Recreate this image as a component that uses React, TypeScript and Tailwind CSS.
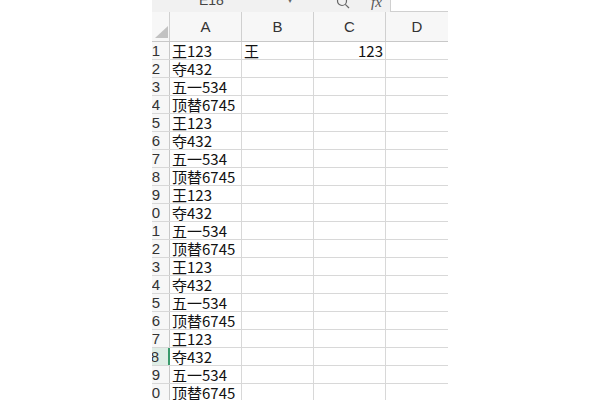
import React from "react";

const vals = ["王123", "夺432", "五一534", "顶替6745"];

export default function App() {
  const rows = Array.from({ length: 20 }, (_, i) => i + 1);
  return (
    <div className="w-[600px] h-[400px] bg-white overflow-hidden flex" style={{ fontFamily: '"Noto Sans CJK SC", "Liberation Sans", sans-serif' }}>
      <div className="w-[152px] shrink-0" />
      <div className="w-[296px] shrink-0 flex flex-col">
        {/* formula bar strip */}
        <div className="h-[12px] flex bg-[#f1f1f1] overflow-hidden shrink-0">
          <div className="w-[138px] relative">
            <span className="absolute left-[47px] top-[-9px] text-[14px] text-[#444] leading-[18px] font-['Liberation_Sans']">E18</span>
            <span className="absolute left-[136px] top-[-6px] text-[8px] text-[#666]">▾</span>
          </div>
          <div className="w-[100px] relative">
            <svg className="absolute left-[46px] top-[-5px]" width="14" height="14" viewBox="0 0 14 14" fill="none" stroke="#666" strokeWidth="1.2">
              <circle cx="6" cy="6" r="4.5" />
              <path d="M9.3 9.3 L13 13" />
            </svg>
            <span className="absolute left-[81px] top-[-9px] text-[15px] italic text-[#555] font-['Liberation_Serif']">fx</span>
          </div>
          <div className="flex-1 bg-white border-l border-b border-[#d0d0d0]" />
        </div>
        {/* column header */}
        <div className="h-[30px] flex bg-[#f7f7f7] border-b border-[#c8c8c8] shrink-0 text-[15px] text-[#333] font-['Liberation_Sans']">
          <div className="w-[18px] border-r border-[#d0d0d0] relative">
            <svg className="absolute left-[3px] top-[14px]" width="13" height="12" viewBox="0 0 13 12">
              <path d="M13 0 L13 12 L0 12 Z" fill="#c2c2c2" />
            </svg>
          </div>
          {["A", "B", "C"].map((c) => (
            <div key={c} className="w-[72px] border-r border-[#d0d0d0] flex items-center justify-center pt-[2px]">{c}</div>
          ))}
          <div className="w-[62px] flex items-center justify-center pt-[2px]">D</div>
        </div>
        {rows.map((r) => {
          const sel = r === 18;
          return (
            <div key={r} className="h-[18px] flex border-b border-[#d8d8d8] shrink-0 text-[15px] leading-[17px] text-[#111]">
              <div className={`w-[18px] overflow-hidden flex justify-end pr-[9px] text-[#333] font-['Liberation_Sans'] ${sel ? "bg-[#dfeee6] text-[#4f9d7c] border-r-2 border-[#3a9a6c]" : "bg-[#f7f7f7] border-r border-[#c8c8c8]"}`}>
                <span className="whitespace-nowrap">{r}</span>
              </div>
              <div className="w-[72px] border-r border-[#d8d8d8] pl-[2px] whitespace-nowrap">{vals[(r - 1) % 4]}</div>
              <div className="w-[72px] border-r border-[#d8d8d8] pl-[2px]">{r === 1 ? "王" : ""}</div>
              <div className="w-[72px] border-r border-[#d8d8d8] pr-[2px] text-right">{r === 1 ? "123" : ""}</div>
              <div className="w-[62px]" />
            </div>
          );
        })}
      </div>
    </div>
  );
}
